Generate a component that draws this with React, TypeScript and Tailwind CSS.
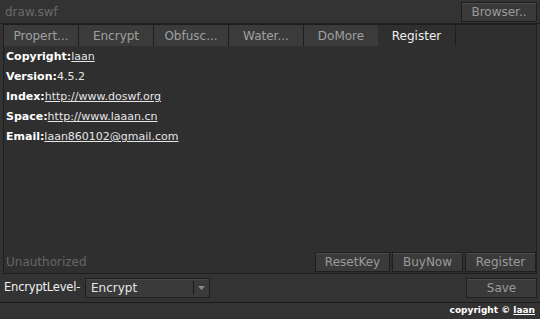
import React from "react";

const Btn = ({ label, w }: { label: string; w: string }) => (
  <div
    className={`${w} h-[20px] flex items-center justify-center border border-[#1f1f1f] bg-[#3a3a3a] text-[#9a9a9a] text-[12px] shadow-[inset_0_1px_0_#4a4a4a]`}
  >
    {label}
  </div>
);

export default function App() {
  const tabs = ["Propert...", "Encrypt", "Obfusc...", "Water...", "DoMore"];
  return (
    <div
      className="w-[540px] h-[319px] bg-[#333333] flex flex-col overflow-hidden"
      style={{ fontFamily: '"DejaVu Sans", Verdana, sans-serif' }}
    >
      <div className="h-[24px] flex items-center justify-between pl-[5px] pr-[3px] border-b border-[#1e1e1e]">
        <span className="text-[12px] text-[#6a6a6a]">draw.swf</span>
        <Btn label="Browser.." w="w-[76px]" />
      </div>
      <div className="flex px-[3px] h-[22px]">
        {tabs.map((t) => (
          <div
            key={t}
            className="w-[76px] h-[22px] flex items-center justify-center bg-[#3b3b3b] border border-[#1e1e1e] border-b-0 -mr-px text-[12px] text-[#a0a0a0]"
          >
            {t}
          </div>
        ))}
        <div className="w-[77px] h-[22px] flex items-center justify-center bg-[#2f2f2f] border-t border-[#1e1e1e] text-[12px] text-[#f0f0f0]">
          Register
        </div>
        <div className="flex-1 h-[22px] border border-[#1e1e1e] border-b-0 bg-[#2f2f2f]" />
      </div>
      <div className="mx-[3px] h-[228px] bg-[#2f2f2f] border border-t-0 border-[#1e1e1e] flex flex-col">
        <div className="flex flex-col pl-[2px] pt-[1px] text-[11px] text-[#e6e6e6] leading-[20px]">
          <div>
            <b className="text-white">Copyright:</b>
            <span className="underline">laan</span>
          </div>
          <div>
            <b className="text-white">Version:</b>
            <span>4.5.2</span>
          </div>
          <div>
            <b className="text-white">Index:</b>
            <span className="underline">http://www.doswf.org</span>
          </div>
          <div>
            <b className="text-white">Space:</b>
            <span className="underline">http://www.laaan.cn</span>
          </div>
          <div>
            <b className="text-white">Email:</b>
            <span className="underline">laan860102@gmail.com</span>
          </div>
        </div>
        <div className="flex-1" />
        <div className="flex items-center h-[20px] mb-[1px] pl-[2px]">
          <span className="text-[12px] text-[#666666] flex-1">Unauthorized</span>
          <div className="flex gap-[2px]">
            <Btn label="ResetKey" w="w-[75px]" />
            <Btn label="BuyNow" w="w-[71px]" />
            <Btn label="Register" w="w-[71px]" />
          </div>
        </div>
      </div>
      <div className="flex items-center h-[22px] mt-[3px] pl-[4px] pr-[3px]">
        <span className="text-[11.5px] text-[#f0f0f0] w-[81px] tracking-[-0.2px]">EncryptLevel-</span>
        <div className="w-[125px] h-[20px] flex items-center bg-[#3a3a3a] border border-[#1f1f1f] shadow-[inset_0_1px_0_#474747]">
          <span className="flex-1 pl-[5px] text-[12px] text-[#e6e6e6]">Encrypt</span>
          <div className="w-px h-[14px] bg-[#1a1a1a]" />
          <div className="w-[15px] flex justify-center">
            <svg width="7" height="4" viewBox="0 0 7 4">
              <path d="M0 0 L7 0 L3.5 4 Z" fill="#8a8a8a" />
            </svg>
          </div>
        </div>
        <div className="flex-1" />
        <Btn label="Save" w="w-[71px]" />
      </div>
      <div className="mt-[3px] border-t border-[#1a1a1a]" />
      <div className="flex-1 flex items-center justify-end pr-[5px] text-[9px] font-bold text-white">
        <span>copyright ©&nbsp;</span>
        <span className="underline">laan</span>
      </div>
    </div>
  );
}
